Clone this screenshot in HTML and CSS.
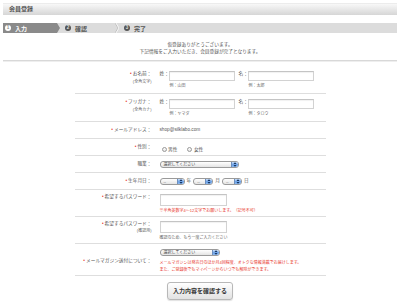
FILE: index.html
```html
<!DOCTYPE html>
<html lang="ja">
<head>
    <meta charset="utf-8">
    <title>会員登録</title>
    <link rel="stylesheet" href="styles.css">
</head>
<body>
    <div class="titlebar">会員登録</div>

    <ol class="steps">
        <li class="step active"><span class="num">1</span>入力</li>
        <li class="step second"><span class="num">2</span>確認</li>
        <li class="sep">
            <svg width="4" height="10" viewBox="0 0 4 10">
                <polyline points="0,0 3,5 0,10" fill="none" stroke="#c2c2c2" stroke-width="1"/>
                <polyline points="1,0 4,5 1,10" fill="none" stroke="#f4f4f4" stroke-width="1"/>
            </svg>
        </li>
        <li class="step third"><span class="num">3</span>完了</li>
    </ol>

    <p class="intro">仮登録ありがとうございます。<br>下記情報をご入力いただき、会員登録が完了となります。</p>

    <form class="form" onsubmit="return false">
        <div class="row">
            <div class="label req">お名前：<small>(全角文字)</small></div>
            <div class="field name">
                <div class="name-part"><span>姓：</span><div><input type="text" class="text"><p class="hint">例：山田</p></div></div>
                <div class="name-part"><span>名：</span><div><input type="text" class="text"><p class="hint">例：太郎</p></div></div>
            </div>
        </div>

        <div class="row">
            <div class="label req">フリガナ：<small>(全角カナ)</small></div>
            <div class="field name">
                <div class="name-part"><span>姓：</span><div><input type="text" class="text"><p class="hint">例：ヤマダ</p></div></div>
                <div class="name-part"><span>名：</span><div><input type="text" class="text"><p class="hint">例：タロウ</p></div></div>
            </div>
        </div>

        <div class="row simple">
            <div class="label req">メールアドレス：</div>
            <div class="field">shop@silklabo.com</div>
        </div>

        <div class="row simple">
            <div class="label req">性別：</div>
            <div class="field radios">
                <label class="radio"><span class="dot"></span>男性</label>
                <label class="radio"><span class="dot"></span>女性</label>
            </div>
        </div>

        <div class="row simple">
            <div class="label">職業：</div>
            <div class="field">
                <div class="select job">選択してください<span class="knob"><svg width="6" height="7" viewBox="0 0 6 7"><path d="M1.5 3L3 1.3L4.5 3Z M1.5 4L3 5.7L4.5 4Z" fill="#12325f"/></svg></span></div>
            </div>
        </div>

        <div class="row simple">
            <div class="label req">生年月日：</div>
            <div class="field birth">
                <div class="select year">--<span class="knob"><svg width="6" height="7" viewBox="0 0 6 7"><path d="M1.5 3L3 1.3L4.5 3Z M1.5 4L3 5.7L4.5 4Z" fill="#12325f"/></svg></span></div>年
                <div class="select month">--<span class="knob"><svg width="6" height="7" viewBox="0 0 6 7"><path d="M1.5 3L3 1.3L4.5 3Z M1.5 4L3 5.7L4.5 4Z" fill="#12325f"/></svg></span></div>月
                <div class="select day">--<span class="knob"><svg width="6" height="7" viewBox="0 0 6 7"><path d="M1.5 3L3 1.3L4.5 3Z M1.5 4L3 5.7L4.5 4Z" fill="#12325f"/></svg></span></div>日
            </div>
        </div>

        <div class="row pass-row">
            <div class="label req">希望するパスワード：</div>
            <div class="field">
                <input type="password" class="text pass">
                <p class="hint red">※半角英数字4〜12文字でお願いします。（記号不可）</p>
            </div>
        </div>

        <div class="row pass-row">
            <div class="label req">希望するパスワード：<small>(確認用)</small></div>
            <div class="field">
                <input type="password" class="text pass">
                <p class="hint">確認のため、もう一度ご入力ください</p>
            </div>
        </div>

        <div class="row magazine">
            <div class="label req">メールマガジン送付について：</div>
            <div class="field">
                <div class="select mag">選択してください<span class="knob"><svg width="6" height="7" viewBox="0 0 6 7"><path d="M1.5 3L3 1.3L4.5 3Z M1.5 4L3 5.7L4.5 4Z" fill="#12325f"/></svg></span></div>
                <p class="hint red">メールマガジンは発売日のほか月4回程度、オトクな情報満載でお届けします。<br>また、ご登録後でもマイページからいつでも解除ができます。</p>
            </div>
        </div>

        <button class="submit" type="submit">入力内容を確認する</button>
    </form>
</body>
</html>
```

FILE: styles.css
```css
* { box-sizing: border-box; }
body { margin: 0; padding: 3px; font-family: "Liberation Sans", "Noto Sans CJK JP", sans-serif; color: #555; background: #fff; }

.titlebar { height: 12px; line-height: 11px; padding-left: 6px; font-size: 6px; font-weight: bold; color: #555; background: linear-gradient(#f8f8f8, #d6d6d6); border-top: 1px solid #ececec; }

.steps { list-style: none; margin: 8px 0 0; padding: 0; height: 10px; display: flex; background: #dcdcdc; }
.step { display: flex; align-items: center; gap: 4px; font-size: 6px; font-weight: bold; color: #555; }
.step.active { width: 57px; padding-left: 2px; color: #fff; background: #8a8a8a; clip-path: polygon(0 0, 54px 0, 57px 5px, 54px 10px, 0 10px); }
.step.second { width: 55px; padding-left: 5px; }
.step.third { padding-left: 5px; }
.sep { display: flex; }
.num { width: 6px; height: 6px; border-radius: 50%; background: #555; color: #e0e0e0; font-size: 4.5px; line-height: 6px; text-align: center; }
.active .num { background: #fff; color: #8a8a8a; }

.intro { margin: 8px 0 5px; padding-bottom: 5px; font-size: 4.7px; line-height: 7px; text-align: center; color: #555; border-bottom: 1px solid #d8d8d8; box-shadow: 0 1px 0 #eee; }

.form { width: 251px; margin: 5px auto 0; }
.row { display: grid; grid-template-columns: 77px 1fr; column-gap: 8px; padding: 5px 0 4px; border-bottom: 1px solid #dedede; font-size: 4.7px; line-height: 6px; }
.row.simple { height: 17px; padding: 5px 0 0; }
.row.pass-row { padding: 3.5px 0 3px; }
.row.magazine { padding: 5px 0 2px; }
.label { text-align: right; color: #555; }
.label small { display: block; font-size: 4px; line-height: 5px; color: #666; margin-top: 1.5px; }
.req::before { content: "•"; color: #e8382e; margin-right: 1px; }
.row.magazine .label { align-self: center; }

.field { color: #555; }
.name { display: flex; gap: 3px; }
.name-part { display: flex; gap: 0.6px; }
.text { display: block; width: 66px; height: 10px; margin: 0; padding: 0; border: 1px solid #d2d2d2; border-top-color: #c4c4c4; background: #fff; box-shadow: inset 0 1px 1px rgba(0,0,0,0.06); }
.text.pass { width: 67px; height: 12px; }
.hint { margin: 2px 0 0; font-size: 4px; line-height: 6px; color: #666; }
.hint.red { color: #e8382e; }
.pass-row .hint { line-height: 5px; margin-top: 2.5px; }
.magazine .hint { line-height: 7px; margin-top: 2.5px; }

.radios { display: flex; gap: 10px; padding-left: 2px; }
.radio { display: flex; align-items: center; gap: 1.5px; }
.dot { width: 5px; height: 5px; border-radius: 50%; border: 1px solid #999; background: linear-gradient(#fff, #e6e6e6); }

.select { position: relative; height: 7px; padding-left: 3px; border: 1px solid #9a9a9a; border-radius: 3px; background: linear-gradient(#fff, #e4e4e4); font-size: 4px; line-height: 5px; color: #444; overflow: hidden; }
.knob { position: absolute; top: 0; right: 0; bottom: 0; width: 7px; display: flex; align-items: center; justify-content: center; background: linear-gradient(#cfe2f9, #6aa0e6 55%, #8fbcf2); border-left: 1px solid #6d8fbe; }
.knob svg { display: block; }
.select.job { width: 79px; }
.select.mag { width: 60px; }
.birth { display: flex; align-items: flex-start; gap: 2px; }
.select.year { width: 25px; }
.select.month { width: 20px; }
.select.day { width: 20px; }

.submit { display: block; width: 66px; height: 18px; margin: 6px auto 0; padding: 0; font-family: inherit; font-size: 6px; font-weight: bold; color: #333; border: 1px solid #b8b8b8; border-radius: 3px; background: linear-gradient(#fff, #e2e2e2); box-shadow: 0 1px 1px rgba(0,0,0,0.12); }
```
